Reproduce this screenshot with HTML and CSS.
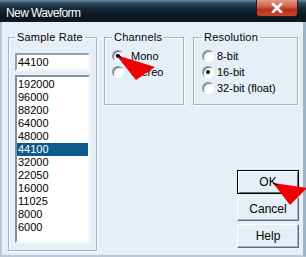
FILE: index.html
```html
<!DOCTYPE html>
<html>
<head>
<meta charset="utf-8">
<link rel="stylesheet" href="styles.css">
</head>
<body>
<div class="window">
  <div class="titlebar">
    <span class="title">New Waveform</span>
    <div class="close">
      <svg width="14" height="10" viewBox="0 0 14 10"><path d="M3 1 L11 9 M11 1 L3 9" stroke="#fff" stroke-width="2.6" stroke-linecap="square"/></svg>
    </div>
  </div>
  <div class="client">
    <fieldset class="group rate">
      <legend>Sample Rate</legend>
      <div class="textbox">44100</div>
      <div class="listbox">
        <div class="item">192000</div>
        <div class="item">96000</div>
        <div class="item">88200</div>
        <div class="item">64000</div>
        <div class="item">48000</div>
        <div class="item selected">44100</div>
        <div class="item">32000</div>
        <div class="item">22050</div>
        <div class="item">16000</div>
        <div class="item">11025</div>
        <div class="item">8000</div>
        <div class="item">6000</div>
      </div>
    </fieldset>
    <div class="right">
      <div class="grouprow">
        <fieldset class="group channels">
          <legend>Channels</legend>
          <div class="opt"><span class="radio checked"></span><span>Mono</span></div>
          <div class="opt"><span class="radio"></span><span>Stereo</span></div>
        </fieldset>
        <fieldset class="group resolution">
          <legend>Resolution</legend>
          <div class="opt"><span class="radio"></span><span>8-bit</span></div>
          <div class="opt"><span class="radio checked"></span><span>16-bit</span></div>
          <div class="opt"><span class="radio"></span><span>32-bit (float)</span></div>
        </fieldset>
      </div>
      <div class="buttons">
        <div class="btn default">OK</div>
        <div class="btn">Cancel</div>
        <div class="btn">Help</div>
      </div>
    </div>
  </div>
  <svg class="overlay" width="306" height="257" viewBox="0 0 306 257">
    <polygon points="116,55 155,67 136,80" fill="#f00000"/>
    <path d="M116,55 L121,57" stroke="#000" stroke-width="1.5"/>
    <polygon points="273,183 307,188 290,205" fill="#f00000"/>
    <path d="M273,183 L278,185" stroke="#000" stroke-width="1.2"/>
  </svg>
</div>
</body>
</html>
```
FILE: styles.css
```css
html, body {
  margin: 0;
  padding: 0;
}
body {
  width: 306px;
  height: 257px;
  overflow: hidden;
  font-family: "Liberation Sans", Arial, sans-serif;
  font-size: 11px;
  color: #000;
  background: #1a2a36;
}
.window {
  position: relative;
  width: 306px;
  height: 257px;
  display: flex;
  flex-direction: column;
}
.titlebar {
  height: 22px;
  flex: none;
  display: flex;
  align-items: flex-start;
  justify-content: space-between;
  background: linear-gradient(to bottom, #6c8aa0 0px, #2f4d62 3px, #132534 9px, #0a1620 16px, #0b1a24 22px);
}
.title {
  color: #fff;
  font-size: 12px;
  letter-spacing: -0.6px;
  padding-left: 6px;
  line-height: 12px;
  margin-top: 7px;
}
.close {
  width: 42px;
  height: 17px;
  margin-right: 8px;
  box-sizing: border-box;
  border: 1px solid #3a1410;
  border-top: none;
  border-radius: 0 0 4px 4px;
  background: linear-gradient(to bottom, #e59a88 0%, #d2604a 40%, #b8301c 60%, #c84a30 100%);
  display: flex;
  align-items: center;
  justify-content: center;
}
.close svg {
  display: block;
}
.client {
  flex: 1;
  display: flex;
  align-items: stretch;
  background: #e6eef8;
  border-left: 2px solid #b9c8d8;
  border-right: 3px solid #9fb3c6;
  border-bottom: 2px solid #b9c8d8;
  padding: 9px 4px 2px 6px;
  gap: 7px;
}
.group {
  margin: 0;
  border: 1px solid #a3b3c5;
  box-shadow: 1px 1px 0 #ffffff, inset 1px 1px 0 #ffffff;
  box-sizing: border-box;
}
.group legend {
  padding: 0 2px;
  line-height: 13px;
  font-size: 11px;
  letter-spacing: 0.2px;
}
.rate {
  width: 89px;
  height: 220px;
  padding: 0 6px 7px 6px;
  display: flex;
  flex-direction: column;
  flex: none;
}
.textbox {
  margin-top: 9px;
  height: 18px;
  box-sizing: border-box;
  background: #fff;
  border: 2px solid;
  border-color: #8fa1b3 #f4f8fc #f4f8fc #8fa1b3;
  padding-left: 1px;
  line-height: 14px;
}
.listbox {
  margin-top: 4px;
  height: 168px;
  box-sizing: border-box;
  background: #fff;
  border: 2px solid;
  border-color: #7f8f9f #f4f8fc #f4f8fc #7f8f9f;
  padding-top: 1px;
}
.item {
  height: 13px;
  line-height: 13px;
  padding-left: 1px;
}
.item.selected {
  background: #0d5a8c;
  color: #fff;
}
.right {
  flex: 1;
  display: flex;
  flex-direction: column;
  margin-bottom: 5px;
}
.grouprow {
  display: flex;
  gap: 9px;
  align-items: stretch;
}
.channels, .resolution {
  height: 74px;
  padding: 4px 4px 8px 7px;
}
.channels {
  width: 80px;
}
.channels .opt {
  gap: 7px;
}
.resolution {
  width: 105px;
  padding-left: 8px;
}
.resolution .opt {
  gap: 3px;
}
.opt {
  height: 16px;
  display: flex;
  align-items: center;
  gap: 4px;
}
.radio {
  width: 12px;
  height: 12px;
  box-sizing: border-box;
  border-radius: 50%;
  border: 1px solid;
  border-color: #8a98a8 #ffffff #ffffff #8a98a8;
  background: #fff;
  box-shadow: inset 1px 1px 0 #6a7684;
  display: flex;
  align-items: center;
  justify-content: center;
  flex: none;
}
.radio.checked::after {
  content: "";
  width: 4px;
  height: 4px;
  border-radius: 50%;
  background: #000;
}
.buttons {
  margin-top: auto;
  align-self: flex-end;
  display: flex;
  flex-direction: column;
  gap: 3px;
}
.btn {
  width: 62px;
  height: 24px;
  box-sizing: border-box;
  border: 1px solid;
  border-color: #ffffff #5f6c78 #5f6c78 #ffffff;
  box-shadow: inset -1px -1px 0 #a9b7c6;
  background: #e6eef8;
  display: flex;
  align-items: center;
  justify-content: center;
  font-size: 12px;
}
.btn.default {
  border: 1px solid #000;
  box-shadow: inset 1px 1px 0 #fff, inset -1px -1px 0 #5f6c78;
}
.overlay {
  position: absolute;
  left: 0;
  top: 0;
  pointer-events: none;
}
```
